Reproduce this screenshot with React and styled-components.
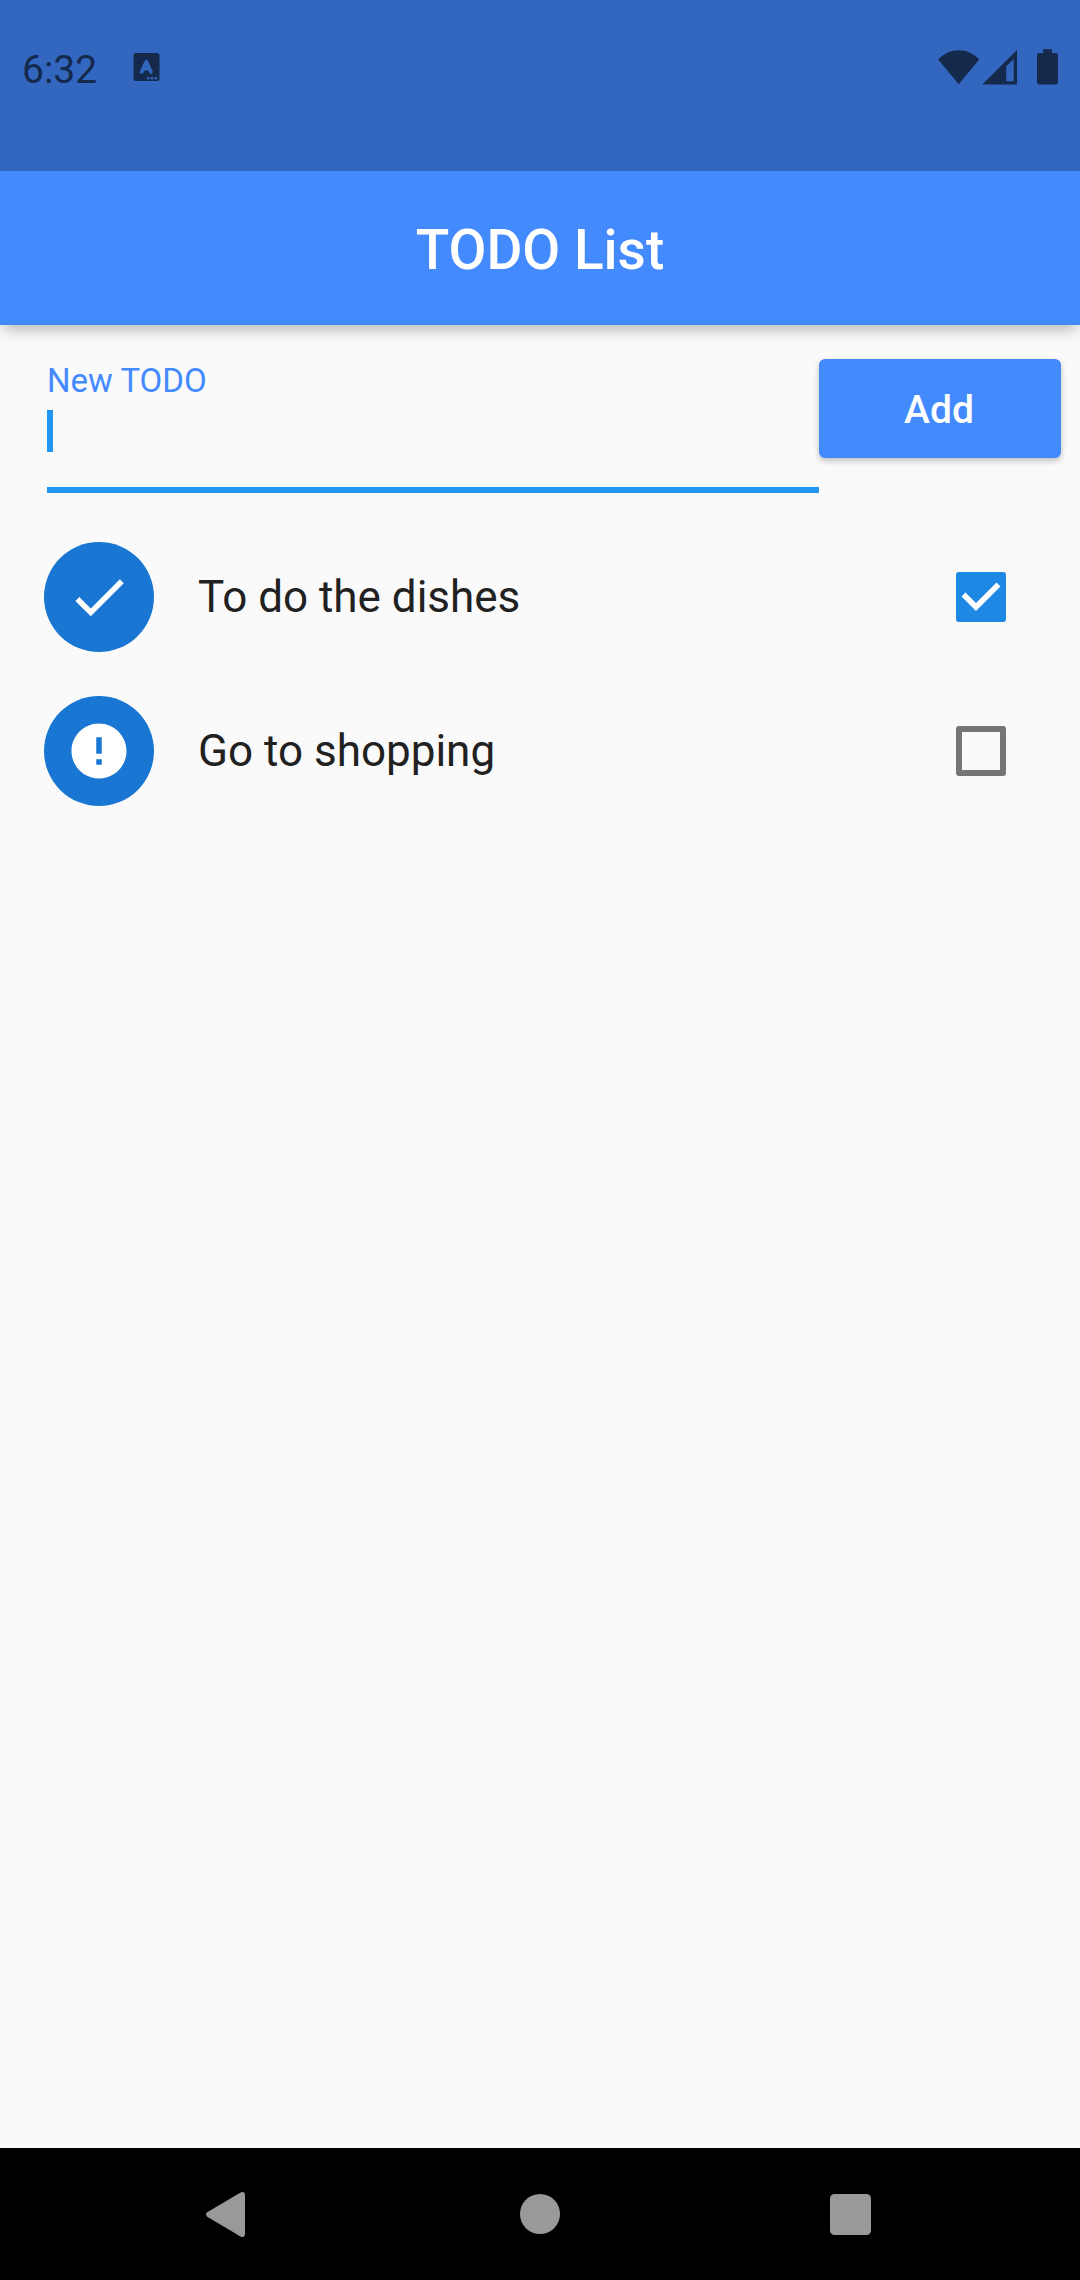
import React, { useState } from "react";
import styled, { createGlobalStyle } from "styled-components";

const colors = {
  primary: "#448aff",
  statusBar: "#3367bf",
  statusInk: "#14294c",
  accent: "#2196f3",
  avatar: "#1976d2",
  checked: "#1e88e5",
  unchecked: "#757575",
  text: "#212121",
  page: "#fafafa",
  navIcon: "#999999",
};

const GlobalStyle = createGlobalStyle`
  *, *::before, *::after { box-sizing: border-box; }
  body {
    margin: 0;
    background: ${colors.page};
    color: ${colors.text};
    font-family: Roboto, "Liberation Sans", sans-serif;
  }
  svg { display: block; }
`;

const Screen = styled.div`
  display: flex;
  flex-direction: column;
  min-height: 100vh;
`;

const StatusBar = styled.div`
  display: flex;
  align-items: center;
  justify-content: space-between;
  padding: 46px 22px 77px;
  background: ${colors.statusBar};
  color: ${colors.statusInk};
`;

const StatusGroup = styled.div`
  display: flex;
  align-items: center;
  gap: ${({ $gap }) => $gap}px;
`;

const Clock = styled.time`
  font-size: 39px;
  line-height: 48px;
`;

const AppBar = styled.header`
  position: relative;
  z-index: 1;
  display: flex;
  align-items: center;
  justify-content: center;
  height: 154px;
  padding-top: 3px;
  background: ${colors.primary};
  box-shadow: 0 8px 14px -3px rgba(0, 0, 0, 0.26);
`;

const Title = styled.h1`
  margin: 0;
  color: #fff;
  font-size: 55px;
  font-weight: 500;
  line-height: 64px;
`;

const Main = styled.main`
  flex: 1;
`;

const TodoForm = styled.form`
  display: flex;
  align-items: flex-start;
  padding: 34px 19px 27px 47px;
`;

const Field = styled.div`
  flex: 1;
  display: flex;
  flex-direction: column;
  gap: 7px;
  min-width: 0;
  padding-bottom: 35px;
  border-bottom: 6px solid ${colors.accent};
`;

const FieldLabel = styled.label`
  color: ${colors.primary};
  font-size: 33px;
  line-height: 44px;
`;

const InputWrap = styled.div`
  position: relative;
`;

const TextInput = styled.input`
  display: block;
  width: 100%;
  height: 42px;
  padding: 0;
  border: 0;
  outline: 0;
  background: transparent;
  color: ${colors.text};
  caret-color: transparent;
  font: inherit;
  font-size: 44px;
`;

const Caret = styled.span`
  position: absolute;
  top: 0;
  left: 0;
  width: 6px;
  height: 42px;
  background: ${colors.accent};
`;

const AddButton = styled.button`
  width: 242px;
  height: 99px;
  padding: 2px 2px 0 0;
  border: 0;
  border-radius: 6px;
  background: ${colors.primary};
  color: #fff;
  font: inherit;
  font-size: 39px;
  font-weight: 500;
  box-shadow: 0 3px 6px rgba(0, 0, 0, 0.24);
`;

const List = styled.ul`
  margin: 0;
  padding: 0;
  list-style: none;
`;

const Row = styled.li`
  display: flex;
  align-items: center;
  gap: 44px;
  height: 154px;
  padding: 0 74px 0 44px;
`;

const Avatar = styled.span`
  display: grid;
  place-items: center;
  width: 110px;
  height: 110px;
  border-radius: 50%;
  background: ${colors.avatar};
  color: #fff;
`;

const RowLabel = styled.label`
  flex: 1;
  font-size: 44px;
  line-height: 52px;
`;

const CheckWrap = styled.span`
  display: grid;

  > * { grid-area: 1 / 1; }
  > svg { pointer-events: none; }
`;

const CheckBox = styled.input`
  appearance: none;
  width: 50px;
  height: 50px;
  margin: 0;
  border: 6px solid ${colors.unchecked};
  border-radius: 3px;

  &:checked {
    border-color: ${colors.checked};
    background: ${colors.checked};
  }
`;

const NavBar = styled.nav`
  display: flex;
  height: 132px;
  padding: 0 72px;
  background: #000;
`;

const NavButton = styled.button`
  flex: 1;
  display: grid;
  place-items: center;
  padding: 0;
  border: 0;
  background: transparent;
  color: ${colors.navIcon};
`;

const KeyboardIcon = () => (
  <svg width="28" height="42" viewBox="0 0 28 42" aria-hidden="true">
    <rect x="0.5" y="4" width="26" height="28" rx="2.5" fill="currentColor" />
    <path
      d="M8.700 23 13.300 12.600 18 23M10.400 19.700H16.400"
      fill="none"
      stroke={colors.statusBar}
      strokeWidth="3.600"
      strokeLinecap="round"
      strokeLinejoin="round"
    />
    <g fill={colors.statusBar}>
      <rect x="14" y="28" width="2.400" height="2.400" />
      <rect x="17.800" y="28" width="2.400" height="2.400" />
      <rect x="21.600" y="28" width="2.400" height="2.400" />
    </g>
  </svg>
);

const WifiIcon = () => (
  <svg width="42" height="42" viewBox="0 0 42 42" aria-hidden="true">
    <path d="M20.7 35.3 0.2 10.4C5.8 4.5 13 1.3 20.7 1.3S35.6 4.5 41.2 10.4Z" fill="currentColor" />
  </svg>
);

const SignalIcon = () => (
  <svg width="36" height="42" viewBox="0 0 36 42" aria-hidden="true">
    <path fillRule="evenodd" d="M0.3 35.6 35 1V35.6ZM24.2 32.3H31.7V10L24.2 17.3Z" fill="currentColor" />
  </svg>
);

const BatteryIcon = () => (
  <svg width="38" height="42" viewBox="0 0 38 42" aria-hidden="true">
    <path d="M23.2 0.3H32V4H35.7Q38 4 38 6.3V33.2Q38 35.5 35.7 35.5H19.3Q17 35.5 17 33.2V6.3Q17 4 19.3 4H23.2Z" fill="currentColor" />
  </svg>
);

const DoneIcon = () => (
  <svg width="66" height="66" viewBox="0 0 24 24" aria-hidden="true">
    <path d="M9 16.17 4.83 12l-1.42 1.41L9 19 21 7l-1.41-1.41z" fill="currentColor" />
  </svg>
);

const PendingIcon = () => (
  <svg width="66" height="66" viewBox="0 0 24 24" aria-hidden="true">
    <path d="M12 2C6.48 2 2 6.48 2 12s4.48 10 10 10 10-4.48 10-10S17.52 2 12 2zm1 15h-2v-2h2v2zm0-4h-2V7h2v6z" fill="currentColor" />
  </svg>
);

const TickMark = () => (
  <svg width="50" height="50" viewBox="0 0 50 50" aria-hidden="true">
    <path d="M7.5 22.5 20 35 42.5 12.5" fill="none" stroke="#fff" strokeWidth="5.5" />
  </svg>
);

const NavGlyph = ({ children }) => (
  <svg width="48" height="48" viewBox="0 0 48 48" fill="currentColor" aria-hidden="true">
    {children}
  </svg>
);

function TodoRow({ todo, onToggle }) {
  return (
    <Row>
      <Avatar>{todo.done ? <DoneIcon /> : <PendingIcon />}</Avatar>
      <RowLabel htmlFor={todo.id}>{todo.title}</RowLabel>
      <CheckWrap>
        <CheckBox id={todo.id} type="checkbox" checked={todo.done} onChange={onToggle} />
        {todo.done && <TickMark />}
      </CheckWrap>
    </Row>
  );
}

export default function App() {
  const [todos, setTodos] = useState([
    { id: "todo-1", title: "To do the dishes", done: true },
    { id: "todo-2", title: "Go to shopping", done: false },
  ]);
  const [draft, setDraft] = useState("");

  const toggle = (id) =>
    setTodos((items) => items.map((t) => (t.id === id ? { ...t, done: !t.done } : t)));

  const addTodo = (event) => {
    event.preventDefault();
    const title = draft.trim();
    if (!title) return;
    setTodos((items) => [...items, { id: `todo-${items.length + 1}`, title, done: false }]);
    setDraft("");
  };

  return (
    <Screen>
      <GlobalStyle />
      <StatusBar>
        <StatusGroup $gap={36}>
          <Clock>6:32</Clock>
          <KeyboardIcon />
        </StatusGroup>
        <StatusGroup $gap={2}>
          <WifiIcon />
          <SignalIcon />
          <BatteryIcon />
        </StatusGroup>
      </StatusBar>
      <AppBar>
        <Title>TODO List</Title>
      </AppBar>
      <Main>
        <TodoForm onSubmit={addTodo}>
          <Field>
            <FieldLabel htmlFor="new-todo">New TODO</FieldLabel>
            <InputWrap>
              <TextInput
                id="new-todo"
                type="text"
                autoComplete="off"
                value={draft}
                onChange={(event) => setDraft(event.target.value)}
              />
              {draft === "" && <Caret />}
            </InputWrap>
          </Field>
          <AddButton type="submit">Add</AddButton>
        </TodoForm>
        <List>
          {todos.map((todo) => (
            <TodoRow key={todo.id} todo={todo} onToggle={() => toggle(todo.id)} />
          ))}
        </List>
      </Main>
      <NavBar>
        <NavButton type="button" aria-label="Back">
          <NavGlyph>
            <path d="M3.2 22.3 36.5 2.6Q41 0.8 41 5.5V43.5Q41 48.2 36.5 46.4L3.2 26.7Q1 24.5 3.2 22.3Z" />
          </NavGlyph>
        </NavButton>
        <NavButton type="button" aria-label="Home">
          <NavGlyph>
            <circle cx="24" cy="24" r="20" />
          </NavGlyph>
        </NavButton>
        <NavButton type="button" aria-label="Recent apps">
          <NavGlyph>
            <rect x="2" y="4" width="41" height="41" rx="4.5" />
          </NavGlyph>
        </NavButton>
      </NavBar>
    </Screen>
  );
}
